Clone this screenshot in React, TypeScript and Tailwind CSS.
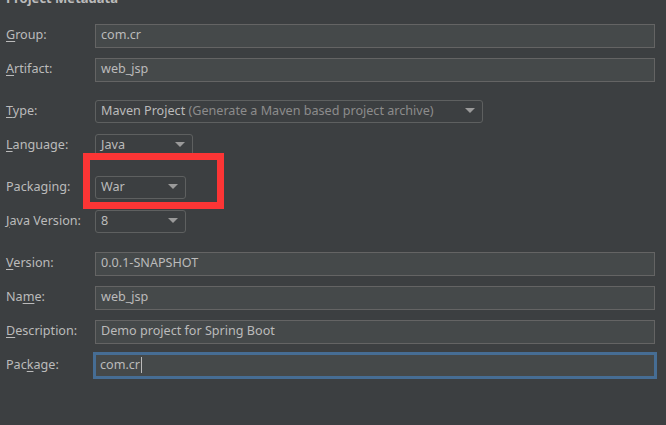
import React from 'react';

const font = { fontFamily: '"Noto Sans", "Open Sans", sans-serif' };

const Label: React.FC<{ text: string; mn?: number }> = ({ text, mn }) => (
  <div className="w-[95px] shrink-0 pl-[6px] text-[12.6px] text-[#bbbbbb]">
    {mn === undefined ? (
      text
    ) : (
      <>
        {text.slice(0, mn)}
        <span className="underline underline-offset-2">{text[mn]}</span>
        {text.slice(mn + 1)}
      </>
    )}
  </div>
);

const Field: React.FC<{ value: string; focused?: boolean }> = ({ value, focused }) =>
  focused ? (
    <div className="ml-[-2px] flex h-[27px] w-[564px] items-center border-[3px] border-[#466d94] bg-[#45494a] pl-[4px] text-[12.6px] text-[#bbbbbb]">
      {value}
      <span className="ml-[1px] h-[16px] w-px bg-[#bbbbbb]" />
    </div>
  ) : (
    <div className="flex h-[24px] w-[560px] items-center border border-[#646464] bg-[#45494a] pl-[5px] text-[12.6px] text-[#bbbbbb]">
      {value}
    </div>
  );

const Combo: React.FC<{ value: string; hint?: string; width: string }> = ({ value, hint, width }) => (
  <div className={`flex h-[23px] ${width} items-center justify-between rounded-[3px] border border-[#5e6060] pl-[5px] pr-[7px] text-[12.6px] text-[#bbbbbb]`}>
    <span>
      {value}
      {hint && <span className="text-[#8c8c8c]"> {hint}</span>}
    </span>
    <svg width="10" height="6" viewBox="0 0 10 6">
      <path d="M0 0 L10 0 L5 5 Z" fill="#9a9a9a" />
    </svg>
  </div>
);

export default function App() {
  return (
    <div className="relative h-[425px] w-[666px] overflow-hidden bg-[#3c3f41]" style={font}>
      <div className="mt-[-11px] pl-[6px] text-[13px] font-bold text-[#bbbbbb]">Project Metadata</div>

      <div className="mt-[15px] flex flex-col">
        <div className="flex items-center">
          <Label text="Group:" mn={0} />
          <Field value="com.cr" />
        </div>
        <div className="mt-[10px] flex items-center">
          <Label text="Artifact:" mn={0} />
          <Field value="web_jsp" />
        </div>

        <div className="mt-[18px] flex items-center">
          <Label text="Type:" mn={0} />
          <Combo value="Maven Project" hint="(Generate a Maven based project archive)" width="w-[388px]" />
        </div>
        <div className="mt-[11px] flex items-center">
          <Label text="Language:" mn={0} />
          <Combo value="Java" width="w-[98px]" />
        </div>
        <div className="mt-[19px] flex items-center">
          <Label text="Packaging:" />
          <Combo value="War" width="w-[91px]" />
        </div>
        <div className="mt-[11px] flex items-center">
          <Label text="Java Version:" mn={0} />
          <Combo value="8" width="w-[91px]" />
        </div>

        <div className="mt-[19px] flex items-center">
          <Label text="Version:" mn={0} />
          <Field value="0.0.1-SNAPSHOT" />
        </div>
        <div className="mt-[10px] flex items-center">
          <Label text="Name:" mn={2} />
          <Field value="web_jsp" />
        </div>
        <div className="mt-[10px] flex items-center">
          <Label text="Description:" mn={0} />
          <Field value="Demo project for Spring Boot" />
        </div>
        <div className="mt-[8px] flex items-center">
          <Label text="Package:" mn={3} />
          <Field value="com.cr" focused />
        </div>
      </div>

      <div className="absolute left-[83px] top-[153px] h-[56px] w-[141px] border-[7px] border-[#fc3535]" />
    </div>
  );
}
